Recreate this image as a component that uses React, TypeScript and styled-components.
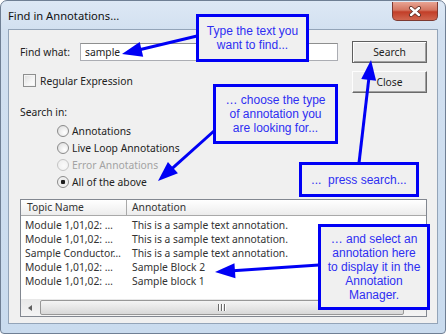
import React from 'react'
import styled, { createGlobalStyle } from 'styled-components'

const UI = `'Noto Sans', 'Open Sans', sans-serif`
const NOTE = `'Liberation Sans', Arial, sans-serif`
const BLUE = '#0000f5'
const FS = '10.3px'

const GlobalStyle = createGlobalStyle`
  html, body { margin: 0; padding: 0; background: #fff; }
  body { width: 446px; height: 334px; overflow: hidden; }
`

const Window = styled.div`
  position: relative;
  box-sizing: border-box;
  width: 446px;
  height: 334px;
  border: 1px solid #6f7f94;
  border-radius: 7px 7px 4px 4px;
  background: linear-gradient(180deg, #dde8f5 0%, #d2e0f0 30px, #c9dbee 100%);
  padding: 0 7px 9px 7px;
  display: flex;
  flex-direction: column;
  font-family: ${UI};
  color: #222;
`

const TitleBar = styled.div`
  height: 28px;
  display: flex;
  align-items: flex-start;
`

const Title = styled.div`
  padding-top: 7px;
  font-size: 11.2px;
  line-height: 16px;
  color: #111;
`

const CloseBox = styled.div`
  margin-left: auto;
  margin-top: 1px;
  box-sizing: border-box;
  width: 46px;
  height: 19px;
  border: 1px solid #7d3a32;
  border-top: none;
  border-radius: 0 0 5px 5px;
  background: linear-gradient(180deg, #e8a493 0%, #d47560 45%, #c23e28 55%, #d0664f 100%);
  display: flex;
  align-items: center;
  justify-content: center;
`

const Client = styled.div`
  box-sizing: border-box;
  height: 295px;
  border: 1px solid #93a4b8;
  background: #f0f0f0;
  padding: 11px 10px 0 11px;
  display: flex;
  flex-direction: column;
`

const Top = styled.div`
  display: grid;
  grid-template-columns: 318px 75px;
  column-gap: 14px;
`

const LeftCol = styled.div`
  display: flex;
  flex-direction: column;
  padding-top: 2px;
  font-size: ${FS};
`

const FindRow = styled.div`
  display: flex;
  align-items: center;
  height: 18px;
`

const FieldLabel = styled.span`
  width: 60px;
`

const TextBox = styled.input`
  flex: 1;
  box-sizing: border-box;
  height: 18px;
  margin: 0;
  border: 1px solid #abadb3;
  border-top-color: #8e8f8f;
  background: #fff;
  padding: 0 0 0 4px;
  font-family: ${UI};
  font-size: ${FS};
  color: #222;
  outline: none;
`

const CheckRow = styled.div`
  display: flex;
  align-items: center;
  gap: 4px;
  margin-top: 13px;
  padding-left: 3px;
  height: 13px;
`

const CheckBox = styled.span`
  box-sizing: border-box;
  width: 13px;
  height: 13px;
  border: 1px solid #8e8f8f;
  background: linear-gradient(135deg, #dcdcdc 0%, #f6f6f6 60%, #fff 100%);
  box-shadow: inset 0 0 0 1px #f4f4f4;
`

const SectionLabel = styled.div`
  margin-top: 18px;
  line-height: 14px;
`

const RadioGroup = styled.div`
  margin-top: 3px;
  padding-left: 37px;
  display: flex;
  flex-direction: column;
`

const RadioRow = styled.div<{ $disabled?: boolean }>`
  display: flex;
  align-items: center;
  gap: 3px;
  height: 17px;
  color: ${(p) => (p.$disabled ? '#a3a3a3' : '#222')};
`

const Radio = styled.span<{ $checked?: boolean; $disabled?: boolean }>`
  box-sizing: border-box;
  width: 12px;
  height: 12px;
  border-radius: 50%;
  border: 1px solid ${(p) => (p.$disabled ? '#c4c4c4' : '#8a8a8a')};
  background: ${(p) =>
    p.$checked
      ? 'radial-gradient(circle, #1d1d1d 0 2px, #e9e9e9 2.5px, #fbfbfb 100%)'
      : p.$disabled
        ? 'radial-gradient(circle at 60% 60%, #fafafa, #ececec)'
        : 'radial-gradient(circle at 65% 65%, #ffffff, #d9d9d9)'};
`

const RightCol = styled.div`
  display: flex;
  flex-direction: column;
  gap: 8px;
`

const Button = styled.div<{ $default?: boolean }>`
  box-sizing: border-box;
  height: 22px;
  display: flex;
  align-items: center;
  justify-content: center;
  font-size: ${FS};
  color: #1e1e1e;
  background: #ececec;
  border: 1px solid ${(p) => (p.$default ? '#5e5e5e' : '#fdfdfd')};
  border-right-color: #6a6a6a;
  border-bottom-color: #6a6a6a;
  box-shadow: ${(p) =>
    p.$default
      ? 'inset 1px 1px #fdfdfd, inset -1px -1px #a0a0a0'
      : 'inset -1px -1px #a0a0a0'};
`

const List = styled.div`
  margin-top: 9px;
  box-sizing: border-box;
  height: 118px;
  border: 1px solid #828790;
  background: #fff;
  display: flex;
  flex-direction: column;
  overflow: hidden;
  font-size: ${FS};
`

const Header = styled.div`
  display: flex;
  height: 16px;
  box-sizing: border-box;
  border-bottom: 1px solid #a9a9a9;
  background: linear-gradient(180deg, #ffffff 0%, #f4f4f4 60%, #ececec 100%);
  color: #333;
`

const HeaderCell = styled.div<{ $w?: number }>`
  ${(p) => (p.$w ? `width: ${p.$w}px; border-right: 1px solid #a9a9a9;` : 'flex: 1;')}
  padding-left: ${(p) => (p.$w ? 6 : 5)}px;
  box-sizing: border-box;
  line-height: 15px;
`

const Rows = styled.div`
  flex: 1;
  padding-top: 2px;
`

const Row = styled.div`
  display: grid;
  grid-template-columns: 106px 1fr;
  height: 14px;
  line-height: 14px;
  color: #333;
  white-space: nowrap;
`

const Cell = styled.span<{ $first?: boolean }>`
  padding-left: ${(p) => (p.$first ? 4 : 5)}px;
  overflow: hidden;
`

const ScrollBar = styled.div`
  height: 17px;
  display: flex;
  align-items: stretch;
  background: linear-gradient(180deg, #e8e8e8, #f4f4f4);
`

const ScrollArrow = styled.div`
  width: 17px;
  display: flex;
  align-items: center;
  justify-content: center;
`

const ArrowLeft = styled.span`
  width: 0;
  height: 0;
  border-top: 3.5px solid transparent;
  border-bottom: 3.5px solid transparent;
  border-right: 4px solid #606060;
`

const Thumb = styled.div`
  box-sizing: border-box;
  width: 364px;
  margin: 1px 0 1px 2px;
  border: 1px solid #979797;
  border-radius: 2px;
  background: linear-gradient(180deg, #f4f4f4 0%, #e6e6e6 50%, #d8d8d8 100%);
  display: flex;
  align-items: center;
  justify-content: center;
  gap: 1px;
`

const Grip = styled.span`
  width: 1px;
  height: 7px;
  background: #6a6a6a;
  box-shadow: 1px 0 #fff;
  margin-right: 1px;
`

const Callout = styled.div<{ $x: number; $y: number; $w: number; $h: number }>`
  position: absolute;
  left: ${(p) => p.$x}px;
  top: ${(p) => p.$y}px;
  width: ${(p) => p.$w}px;
  height: ${(p) => p.$h}px;
  box-sizing: border-box;
  border: 3px solid ${BLUE};
  background: #f0f0f0;
  display: flex;
  align-items: center;
  justify-content: center;
  text-align: center;
  font-family: ${NOTE};
  font-size: 12px;
  line-height: 14px;
  color: #2e2ef2;
  white-space: pre;
`

const Overlay = styled.svg`
  position: absolute;
  left: 0;
  top: 0;
  pointer-events: none;
`

type Pt = [number, number]

function Arrow({ from, to }: { from: Pt; to: Pt }) {
  const [x1, y1] = from
  const [x2, y2] = to
  const dx = x2 - x1
  const dy = y2 - y1
  const len = Math.hypot(dx, dy)
  const ux = dx / len
  const uy = dy / len
  const hl = 20
  const hw = 7.5
  const bx = x2 - ux * hl
  const by = y2 - uy * hl
  const px = -uy
  const py = ux
  const pts = `${x2},${y2} ${bx + px * hw},${by + py * hw} ${bx - px * hw},${by - py * hw}`
  return (
    <g>
      <line x1={x1} y1={y1} x2={bx + ux * 2} y2={by + uy * 2} stroke={BLUE} strokeWidth={3} />
      <polygon points={pts} fill={BLUE} />
    </g>
  )
}

const rows = [
  ['Module 1,01,02: …', 'This is a sample text annotation.'],
  ['Module 1,01,02: …', 'This is a sample text annotation.'],
  ['Sample Conductor…', 'This is a sample text annotation.'],
  ['Module 1,01,02: …', 'Sample Block 2'],
  ['Module 1,01,02: …', 'Sample block 1'],
]

export default function App() {
  return (
    <>
      <GlobalStyle />
      <Window>
        <TitleBar>
          <Title>Find in Annotations...</Title>
          <CloseBox>
            <svg width="14" height="11" viewBox="0 0 14 11">
              <path d="M3 2 L11 9 M11 2 L3 9" stroke="#5a2a22" strokeWidth="4" strokeLinecap="round" />
              <path d="M3 2 L11 9 M11 2 L3 9" stroke="#fff" strokeWidth="2.4" strokeLinecap="round" />
            </svg>
          </CloseBox>
        </TitleBar>
        <Client>
          <Top>
            <LeftCol>
              <FindRow>
                <FieldLabel>Find what:</FieldLabel>
                <TextBox readOnly value="sample" />
              </FindRow>
              <CheckRow>
                <CheckBox />
                Regular Expression
              </CheckRow>
              <SectionLabel>Search in:</SectionLabel>
              <RadioGroup>
                <RadioRow>
                  <Radio />
                  Annotations
                </RadioRow>
                <RadioRow>
                  <Radio />
                  Live Loop Annotations
                </RadioRow>
                <RadioRow $disabled>
                  <Radio $disabled />
                  Error Annotations
                </RadioRow>
                <RadioRow>
                  <Radio $checked />
                  All of the above
                </RadioRow>
              </RadioGroup>
            </LeftCol>
            <RightCol>
              <Button $default>Search</Button>
              <Button>Close</Button>
            </RightCol>
          </Top>
          <List>
            <Header>
              <HeaderCell $w={106}>Topic Name</HeaderCell>
              <HeaderCell>Annotation</HeaderCell>
            </Header>
            <Rows>
              {rows.map(([topic, note], i) => (
                <Row key={i}>
                  <Cell $first>{topic}</Cell>
                  <Cell>{note}</Cell>
                </Row>
              ))}
            </Rows>
            <ScrollBar>
              <ScrollArrow>
                <ArrowLeft />
              </ScrollArrow>
              <Thumb>
                <Grip />
                <Grip />
                <Grip />
              </Thumb>
            </ScrollBar>
          </List>
        </Client>

        <Overlay width={446} height={334}>
          <Arrow from={[196, 35]} to={[121, 53]} />
          <Arrow from={[213, 130]} to={[157, 180]} />
          <Arrow from={[358, 162]} to={[370, 59]} />
          <Arrow from={[318, 264]} to={[214, 271]} />
        </Overlay>

        <Callout $x={195} $y={13} $w={113} $h={48}>
          {'Type the text you\nwant to find...'}
        </Callout>
        <Callout $x={212} $y={83} $w={125} $h={60}>
          {'… choose the type\nof annotation you\nare looking for...'}
        </Callout>
        <Callout $x={298} $y={161} $w={120} $h={35}>
          {'...  press search...'}
        </Callout>
        <Callout $x={317} $y={223} $w={112} $h={86}>
          {'… and select an\nannotation here\nto display it in the\nAnnotation\nManager.'}
        </Callout>
      </Window>
    </>
  )
}
